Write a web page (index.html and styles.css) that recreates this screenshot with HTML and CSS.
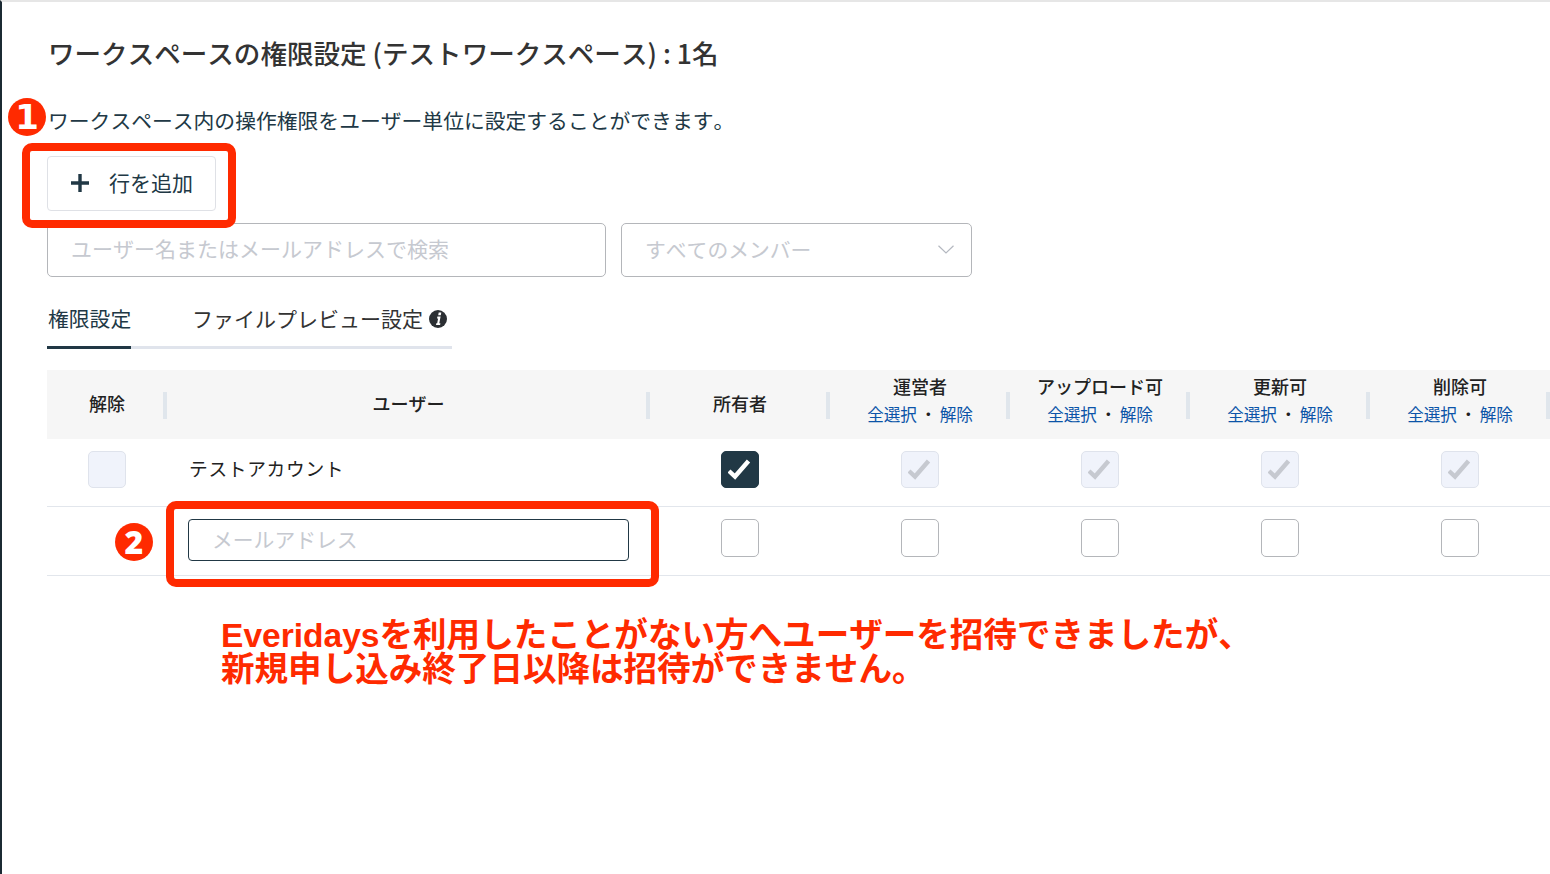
FILE: index.html
```html
<!DOCTYPE html>
<html lang="ja">
<head>
<meta charset="utf-8">
<title>ワークスペースの権限設定</title>
<link rel="stylesheet" href="styles.css">
</head>
<body>
<main class="page">
  <h1 class="title">ワークスペースの権限設定 (テストワークスペース) : 1名</h1>
  <p class="desc">ワークスペース内の操作権限をユーザー単位に設定することができます。</p>
  <button class="add-btn" type="button">
    <svg class="plus" viewBox="0 0 18 18" width="18" height="18"><path d="M9 0v18M0 9h18" fill="none" stroke="#213845" stroke-width="3.4"/></svg>
    <span class="add-label">行を追加</span>
  </button>
  <div class="filters">
    <div class="field search">ユーザー名またはメールアドレスで検索</div>
    <div class="field select">すべてのメンバー
      <svg class="chevron" viewBox="0 0 16 9" width="16" height="9"><path d="M.5.8 8 8l7.5-7.2" fill="none" stroke="#b4b8c0" stroke-width="1.2"/></svg>
    </div>
  </div>
  <nav class="tabs">
    <a class="tab active">権限設定</a>
    <a class="tab">ファイルプレビュー設定
      <svg class="info" viewBox="0 0 18 18" width="18" height="18"><circle cx="9" cy="9" r="9" fill="#2b2f33"/><path d="M9.7 2.6h2.6l-.5 2.6H9.2zM8.4 6.6h3.2l-1.3 6.6h1.1l-.3 1.8H7l.3-1.8h.9l.9-4.8H8z" fill="#fff"/></svg>
    </a>
  </nav>
  <section class="table">
    <div class="row head">
      <div class="th sep">解除</div>
      <div class="th sep">ユーザー</div>
      <div class="th sep">所有者</div>
      <div class="th sep">運営者<div class="links"><a>全選択</a><i>・</i><a>解除</a></div></div>
      <div class="th sep">アップロード可<div class="links"><a>全選択</a><i>・</i><a>解除</a></div></div>
      <div class="th sep">更新可<div class="links"><a>全選択</a><i>・</i><a>解除</a></div></div>
      <div class="th sep">削除可<div class="links"><a>全選択</a><i>・</i><a>解除</a></div></div>
    </div>
    <div class="row body-row first">
      <div class="td"><span class="box muted"></span></div>
      <div class="td user">テストアカウント</div>
      <div class="td"><span class="box on"><svg viewBox="0 0 24 24" width="24" height="24"><path d="M1 13l6 5.5L20.5 3" fill="none" stroke="#fff" stroke-width="4.4"/></svg></span></div>
      <div class="td"><span class="box muted"><svg viewBox="0 0 24 24" width="24" height="24"><path d="M1 13l6 5.5L20.5 3" fill="none" stroke="#c6c9d0" stroke-width="4.4"/></svg></span></div>
      <div class="td"><span class="box muted"><svg viewBox="0 0 24 24" width="24" height="24"><path d="M1 13l6 5.5L20.5 3" fill="none" stroke="#c6c9d0" stroke-width="4.4"/></svg></span></div>
      <div class="td"><span class="box muted"><svg viewBox="0 0 24 24" width="24" height="24"><path d="M1 13l6 5.5L20.5 3" fill="none" stroke="#c6c9d0" stroke-width="4.4"/></svg></span></div>
      <div class="td"><span class="box muted"><svg viewBox="0 0 24 24" width="24" height="24"><path d="M1 13l6 5.5L20.5 3" fill="none" stroke="#c6c9d0" stroke-width="4.4"/></svg></span></div>
    </div>
    <div class="row body-row second">
      <div class="td"></div>
      <div class="td user"><div class="email">メールアドレス</div></div>
      <div class="td"><span class="box"></span></div>
      <div class="td"><span class="box"></span></div>
      <div class="td"><span class="box"></span></div>
      <div class="td"><span class="box"></span></div>
      <div class="td"><span class="box"></span></div>
    </div>
  </section>
</main>
<div class="badge badge-one">1</div>
<div class="badge badge-two">2</div>
<div class="callout callout-one"></div>
<div class="callout callout-two"></div>
<p class="note">Everidaysを利用したことがない方へユーザーを招待できましたが、<br>新規申し込み終了日以降は招待ができません。</p>
</body>
</html>
```

FILE: styles.css
```css
* { box-sizing: border-box; }
html, body { margin: 0; height: 100%; background: #fff; overflow: hidden; }
body {
  font-family: "Noto Sans CJK JP", "Noto Sans", sans-serif;
  font-kerning: none;
  color: #213845;
}
.page {
  height: 874px;
  border-top: 2px solid #e6e6e6;
  border-left: 2px solid #1b2a33;
  padding: 33px 0 0 45px;
}
.title {
  margin: 0 0 0 1px;
  font-size: 26.55px;
  line-height: 36px;
  font-weight: 500;
  color: #333;
  white-space: nowrap;
}
.desc {
  margin: 34px 0 0 1px;
  font-size: 20.8px;
  line-height: 30px;
  color: #213845;
  white-space: nowrap;
}
.add-btn {
  display: flex;
  align-items: center;
  gap: 20px;
  width: 169px;
  height: 55px;
  margin-top: 21px;
  padding: 0 0 2px 23px;
  background: #fff;
  border: 1px solid #dfe1e6;
  border-radius: 4px;
  font: inherit;
  font-size: 21px;
  color: #213845;
}
.add-label { margin-top: -2px; }
.filters { display: flex; gap: 15px; margin-top: 12px; }
.field {
  height: 54px;
  display: flex;
  align-items: center;
  padding: 0 23px 2px;
  border: 1px solid #b4b6ba;
  border-radius: 5px;
  font-size: 20.8px;
  color: #c6c9d0;
  white-space: nowrap;
}
.search { width: 559px; font-size: 21px; padding-bottom: 4px; }
.select { width: 351px; justify-content: space-between; padding-right: 17px; }
.tabs {
  display: flex;
  width: 405px;
  height: 72px;
  align-items: flex-end;
  border-bottom: 3px solid #e0e4ec;
}
.tab {
  display: flex;
  align-items: center;
  gap: 6px;
  height: 45px;
  margin-bottom: -3px;
  padding-bottom: 18px;
  font-size: 21px;
  line-height: 30px;
  color: #333;
  white-space: nowrap;
}
.info { margin-top: 2px; }
.tab.active {
  width: 84px;
  padding-left: 1px;
  padding-bottom: 15px;
  margin-right: 61px;
  font-size: 20.8px;
  color: #213845;
  border-bottom: 3px solid #213845;
}
.table { margin-top: 21px; }
.row {
  display: grid;
  grid-template-columns: 120px 483px repeat(5, 180px);
}
.head { height: 69px; background: #f6f6f6; align-items: center; }
.th {
  position: relative;
  padding-bottom: 4px;
  text-align: center;
  font-size: 18px;
  line-height: 26px;
  font-weight: 500;
  color: #222;
  white-space: nowrap;
}
.sep::after {
  content: "";
  position: absolute;
  right: 0;
  top: 50%;
  width: 4px;
  height: 27px;
  margin-top: -13px;
  background: #e0e6ec;
}
.links { margin: 1px 0 5px; font-size: 16.64px; line-height: 28px; font-weight: 400; color: #0b54a8; }
.links i { font-style: normal; color: #222; margin: 0 3px; }
.body-row { border-bottom: 1px solid #e2e6ec; }
.first { height: 68px; }
.second { height: 69px; }
.td { display: flex; justify-content: center; padding-top: 12px; }
.user { justify-content: flex-start; padding-left: 22px; font-size: 18.72px; line-height: 33px; color: #222; letter-spacing: .7px; }
.box {
  width: 38px;
  height: 37px;
  display: flex;
  align-items: center;
  justify-content: center;
  background: #fff;
  border: 1px solid #b4b6ba;
  border-radius: 5px;
}
.second .box { height: 38px; }
.box.muted { background: #f0f3fb; border-color: #dfe3ec; }
.box.on { background: #213845; border-color: #213845; }
.email {
  width: 441px;
  height: 42px;
  margin-left: -1px;
  padding-left: 23px;
  border: 1px solid #213845;
  border-radius: 4px;
  font-size: 20.8px;
  line-height: 38px;
  letter-spacing: 0;
  color: #c6c9d0;
}
.badge {
  position: absolute;
  width: 38px;
  height: 38px;
  border-radius: 50%;
  background: #ff2a00;
  color: #fff;
  text-align: center;
  line-height: 38px;
}
.badge-one { left: 8px; top: 98px; font-family: "DejaVu Sans", sans-serif; font-weight: 700; font-size: 34px; }
.badge-two { left: 115px; top: 523px; font-family: "Noto Sans", sans-serif; font-weight: 900; font-size: 32px; }
.callout {
  position: absolute;
  border: 8px solid #ff2a00;
  border-radius: 10px;
}
.callout-one { left: 22px; top: 143px; width: 214px; height: 85px; }
.callout-two { left: 166px; top: 501px; width: 493px; height: 86px; }
.note {
  position: absolute;
  left: 221px;
  top: 619px;
  margin: 0;
  font-family: "Liberation Sans", "Noto Sans CJK JP", sans-serif;
  font-size: 33.55px;
  line-height: 34px;
  font-weight: 700;
  color: #ff2a00;
  white-space: nowrap;
}
```
